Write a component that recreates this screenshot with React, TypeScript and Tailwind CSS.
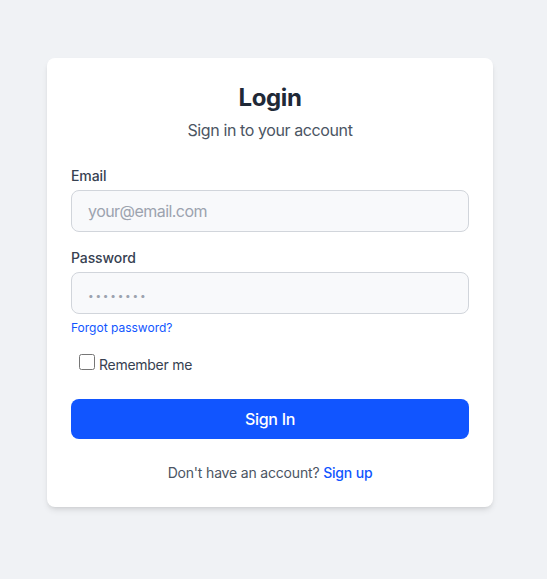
import React, { useState } from 'react'

export default function App() {
  const [email, setEmail] = useState('')
  const [password, setPassword] = useState('')
  const [remember, setRemember] = useState(false)

  return (
    <div className="min-h-screen bg-[#f0f2f5] pt-[58px] pl-[47px] font-['Inter',sans-serif]">
      <div className="w-[446px] rounded-lg bg-white px-6 pt-6 pb-6 shadow-md">
        <div className="mb-6 text-center">
          <h1 className="text-2xl font-bold tracking-[-0.4px] text-[#1f2937]">Login</h1>
          <p className="mt-1 text-base tracking-[-0.4px] text-[#4b5563]">Sign in to your account</p>
        </div>

        <form onSubmit={(e) => e.preventDefault()}>
          <div>
            <label className="mb-1 block text-sm font-medium tracking-[-0.1px] text-[#374151]">Email</label>
            <input
              type="email"
              value={email}
              onChange={(e) => setEmail(e.target.value)}
              placeholder="your@email.com"
              className="block h-[42px] w-full rounded-lg border border-[#d1d5db] bg-[#f8f9fb] px-4 text-base tracking-[-0.55px] text-[#1f2937] placeholder:text-[#9ca3af] outline-none"
            />
          </div>

          <div className="mt-4">
            <label className="mb-1 block text-sm font-medium tracking-[-0.1px] text-[#374151]">Password</label>
            <input
              type="password"
              value={password}
              onChange={(e) => setPassword(e.target.value)}
              placeholder="••••••••"
              className="block h-[42px] w-full rounded-lg border border-[#d1d5db] bg-[#f8f9fb] px-4 text-base text-[#1f2937] placeholder:text-[10px] placeholder:tracking-[1.8px] placeholder:text-[#9ca3af] outline-none"
            />
            <a href="#" className="mt-[6px] block text-xs text-[#1155ff]">
              Forgot password?
            </a>
          </div>

          <div className="mt-4 pl-2">
            <label className="text-sm tracking-[-0.27px] text-[#374151]">
              <input
                type="checkbox"
                checked={remember}
                onChange={(e) => setRemember(e.target.checked)}
                className="mr-1 h-4 w-4"
              />
              Remember me
            </label>
          </div>

          <button
            type="submit"
            className="mt-[23px] h-10 w-full rounded-lg bg-[#1155ff] text-base font-medium tracking-[-0.3px] text-white"
          >
            Sign In
          </button>
        </form>

        <p className="mt-6 text-center text-sm tracking-[-0.18px] text-[#4b5563]">
          Don't have an account?{' '}
          <a href="#" className="font-medium text-[#1155ff]">
            Sign up
          </a>
        </p>
      </div>
    </div>
  )
}
